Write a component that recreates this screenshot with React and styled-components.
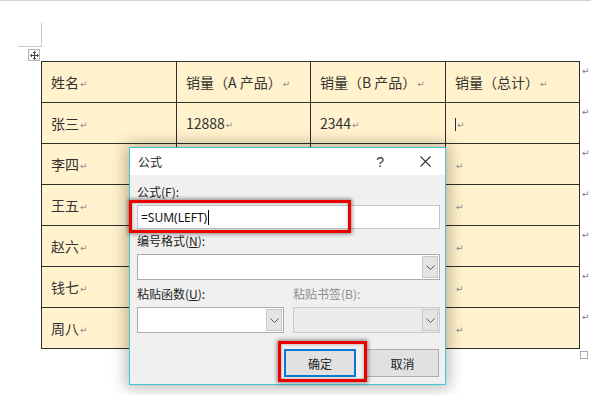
import React from 'react';
import styled, { createGlobalStyle } from 'styled-components';

const GlobalStyle = createGlobalStyle`
    html, body {
        margin: 0;
        padding: 0;
        background: #ffffff;
    }
    body {
        font-family: "Noto Sans CJK SC", "Noto Sans", sans-serif;
        color: #222;
    }
`;

const header = ['姓名', '销量（A 产品）', '销量（B 产品）', '销量（总计）'];
const rows = [
    ['张三', '12888', '2344', ''],
    ['李四', '', '', ''],
    ['王五', '', '', ''],
    ['赵六', '', '', ''],
    ['钱七', '', '', ''],
    ['周八', '', '', ''],
];

function Chevron() {
    return (
        <svg width="9" height="5" viewBox="0 0 9 5">
            <polyline points="0.5,0.5 4.5,4.5 8.5,0.5" fill="none" stroke="#555" strokeWidth="1" />
        </svg>
    );
}

function MoveIcon() {
    return (
        <svg width="9" height="9" viewBox="0 0 9 9">
            <path d="M4.5 0.5 L4.5 8.5 M0.5 4.5 L8.5 4.5" stroke="#444" strokeWidth="1" />
            <path d="M3 2 L4.5 0.5 L6 2 M3 7 L4.5 8.5 L6 7 M2 3 L0.5 4.5 L2 6 M7 3 L8.5 4.5 L7 6" fill="none" stroke="#444" strokeWidth="0.9" />
        </svg>
    );
}

function Select({ width, disabled }) {
    return (
        <SelectBox width={width} disabled={disabled}>
            <SelectArrow>
                <Chevron />
            </SelectArrow>
        </SelectBox>
    );
}

function App() {
    return (
        <Root>
            <GlobalStyle />
            <TopRule />
            <Sheet>
                <Corner />
                <Handle>
                    <MoveIcon />
                </Handle>
                <TableWrap>
                    <Table>
                        <colgroup>
                            <col style={{ width: 135 }} />
                            <col style={{ width: 134 }} />
                            <col style={{ width: 135 }} />
                            <col style={{ width: 134 }} />
                        </colgroup>
                        <tbody>
                            <tr>
                                {header.map((h) => (
                                    <Cell key={h}>
                                        {h}
                                        <Mark>↵</Mark>
                                    </Cell>
                                ))}
                            </tr>
                            {rows.map((r, i) => (
                                <tr key={r[0]}>
                                    {r.map((c, j) => (
                                        <Cell key={j}>
                                            {i === 0 && j === 3 && <Caret />}
                                            {c}
                                            <Mark>↵</Mark>
                                        </Cell>
                                    ))}
                                </tr>
                            ))}
                        </tbody>
                    </Table>
                    <RowEnds>
                        {[header, ...rows].map((r) => (
                            <RowEnd key={r[0]}>↵</RowEnd>
                        ))}
                    </RowEnds>
                    <ResizeHandle />
                </TableWrap>
            </Sheet>

            <Dialog>
                <TitleBar>
                    <Title>公式</Title>
                    <TitleButtons>
                        <Help>?</Help>
                        <Close>
                            <svg width="11" height="11" viewBox="0 0 11 11">
                                <path d="M0.5 0.5 L10.5 10.5 M10.5 0.5 L0.5 10.5" stroke="#333" strokeWidth="1.1" />
                            </svg>
                        </Close>
                    </TitleButtons>
                </TitleBar>
                <Body>
                    <Label top="9">公式(F):</Label>
                    <Input>
                        =SUM(LEFT)<InputCaret />
                    </Input>
                    <Label top="4">编号格式(<Key>N</Key>):</Label>
                    <Select width="303" />
                    <Pair>
                        <Field>
                            <Label top="6">粘贴函数(<Key>U</Key>):</Label>
                            <Select width="147" />
                        </Field>
                        <Field>
                            <Label top="6" muted>粘贴书签(B):</Label>
                            <Select width="147" disabled />
                        </Field>
                    </Pair>
                    <Buttons>
                        <Button primary>确定</Button>
                        <Button>取消</Button>
                    </Buttons>
                </Body>
                <Highlight left="-1" top="52" width="222" height="33" />
                <Highlight left="148" top="193" width="89" height="41" />
            </Dialog>
        </Root>
    );
}

const Root = styled.div`
    position: relative;
    width: 591px;
    height: 395px;
    overflow: hidden;
`;
const TopRule = styled.div`
    height: 1px;
    background: #d2d2d2;
`;
const Sheet = styled.div`
    padding: 22px 0 0 18px;
`;
const Corner = styled.div`
    box-sizing: border-box;
    width: 24px;
    height: 24px;
    border-right: 1px solid #c9c9c9;
    border-bottom: 1px solid #c9c9c9;
`;
const Handle = styled.div`
    box-sizing: border-box;
    width: 12px;
    height: 12px;
    margin: 2px 0 0 10px;
    border: 1px solid #b5b5b5;
    background: #fafafa;
    display: flex;
    align-items: center;
    justify-content: center;
`;
const TableWrap = styled.div`
    position: relative;
    margin: 0 0 0 23px;
    display: flex;
    align-items: flex-start;
`;
const Table = styled.table`
    border-collapse: collapse;
    table-layout: fixed;
    width: 538px;
`;
const Cell = styled.td`
    height: 40px;
    padding: 0 0 0 9px;
    background: #fff2cc;
    border: 1px solid #2e2e2e;
    font-size: 14px;
    color: #333;
    white-space: nowrap;
    vertical-align: middle;
`;
const RowEnds = styled.div`
    display: flex;
    flex-direction: column;
    padding: 4px 0 0 2px;
`;
const RowEnd = styled.div`
    height: 41px;
    font-family: "DejaVu Sans", sans-serif;
    font-size: 9px;
    line-height: 12px;
    color: #7a7a7a;
`;
const Mark = styled.span`
    font-family: "DejaVu Sans", sans-serif;
    font-size: 9px;
    color: #8c8c8c;
    margin-left: 1px;
    vertical-align: 1px;
`;
const Caret = styled.span`
    display: inline-block;
    width: 1px;
    height: 13px;
    background: #1f2a5c;
    vertical-align: -2px;
`;
const ResizeHandle = styled.div`
    position: absolute;
    left: 539px;
    top: 290px;
    width: 6px;
    height: 6px;
    border: 1px solid #a8a8a8;
    background: #fff;
`;

const Dialog = styled.div`
    position: absolute;
    left: 129px;
    top: 147px;
    width: 317px;
    height: 238px;
    box-sizing: border-box;
    border: 1px solid #43c6d3;
    background: #f0f0f0;
    box-shadow: 0 0 14px 3px rgba(0, 0, 0, 0.28);
    font-size: 12px;
`;
const TitleBar = styled.div`
    height: 27px;
    background: #ffffff;
    display: flex;
    align-items: center;
    justify-content: space-between;
    padding: 0 14px 0 8px;
`;
const Title = styled.span`
    font-size: 12px;
    color: #222;
`;
const TitleButtons = styled.div`
    display: flex;
    align-items: center;
    gap: 36px;
`;
const Help = styled.span`
    font-family: "Liberation Sans", sans-serif;
    font-size: 14px;
    color: #333;
`;
const Close = styled.span`
    display: flex;
`;
const Body = styled.div`
    padding: 0 5px 0 7px;
    display: flex;
    flex-direction: column;
`;
const Label = styled.div`
    margin: ${(p) => p.top}px 0 5px;
    line-height: 16px;
    font-size: 12px;
    color: ${(p) => (p.muted ? '#8d8d8d' : '#222')};
`;
const Key = styled.span`
    text-decoration: underline;
    text-decoration-thickness: 1px;
    text-underline-offset: 1px;
`;
const Input = styled.div`
    box-sizing: border-box;
    width: 303px;
    height: 24px;
    background: #fff;
    border: 1px solid #c4c4c4;
    padding: 0 0 0 3px;
    display: flex;
    align-items: center;
    font-family: "Noto Sans", sans-serif;
    font-size: 12px;
    color: #111;
`;
const InputCaret = styled.span`
    display: inline-block;
    width: 1px;
    height: 15px;
    margin-left: 1px;
    background: #000;
`;
const SelectBox = styled.div`
    box-sizing: border-box;
    width: ${(p) => p.width}px;
    height: 26px;
    background: ${(p) => (p.disabled ? '#ebebeb' : '#ffffff')};
    border: 1px solid ${(p) => (p.disabled ? '#c9c9c9' : '#acacac')};
    display: flex;
    justify-content: flex-end;
`;
const SelectArrow = styled.div`
    box-sizing: border-box;
    width: 16px;
    margin: 1px;
    background: #e4e4e4;
    border: 1px solid #c8c8c8;
    display: flex;
    align-items: center;
    justify-content: center;
`;
const Pair = styled.div`
    display: flex;
    gap: 9px;
`;
const Field = styled.div`
    display: flex;
    flex-direction: column;
`;
const Buttons = styled.div`
    display: flex;
    justify-content: flex-end;
    gap: 10px;
    margin-top: 16px;
    padding-right: 1px;
`;
const Button = styled.div`
    box-sizing: border-box;
    width: ${(p) => (p.primary ? 72 : 73)}px;
    height: 28px;
    background: #e1e1e1;
    border: ${(p) => (p.primary ? '2px solid #0a78d4' : '1px solid #adadad')};
    display: flex;
    align-items: center;
    justify-content: center;
    font-size: 12px;
    color: #222;
`;
const Highlight = styled.div`
    position: absolute;
    left: ${(p) => p.left}px;
    top: ${(p) => p.top}px;
    width: ${(p) => p.width}px;
    height: ${(p) => p.height}px;
    box-sizing: border-box;
    border: 3px solid #ee0000;
    box-shadow: 0 0 4px 1px rgba(0, 0, 0, 0.45), inset 0 0 3px rgba(0, 0, 0, 0.35);
`;

export default App;
